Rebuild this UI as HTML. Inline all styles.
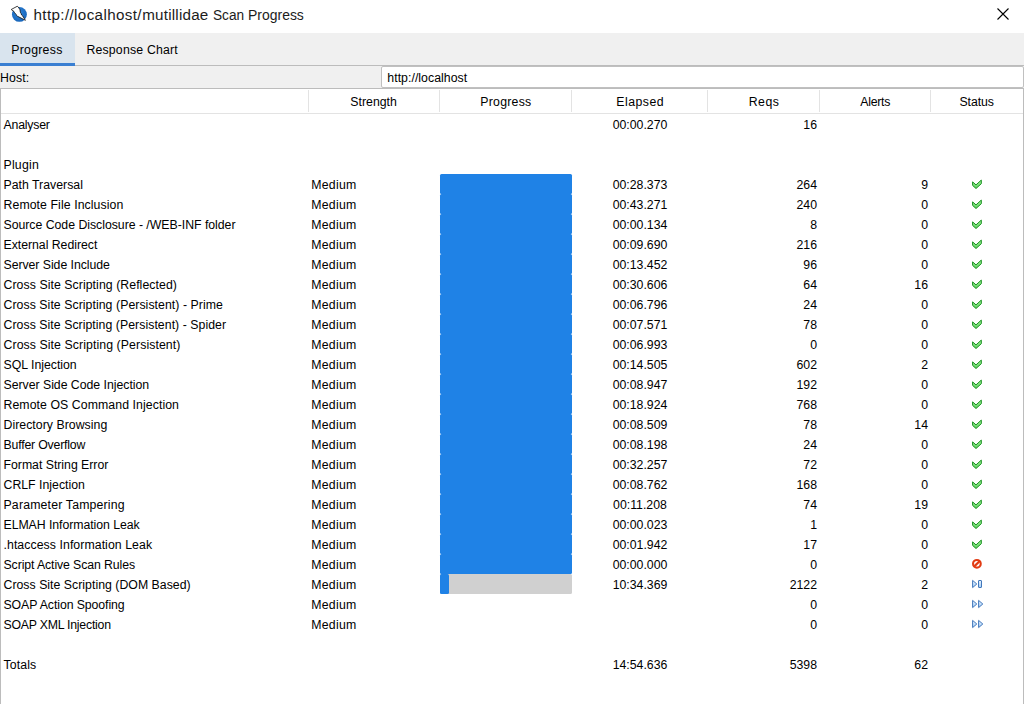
<!DOCTYPE html>
<html><head><meta charset="utf-8"><style>
*{margin:0;padding:0;box-sizing:border-box}
html,body{width:1024px;height:704px;overflow:hidden;background:#fff;font-family:"Liberation Sans",sans-serif;color:#000}
.a{position:absolute}
.ti{top:4px;color:#1c1c1c;font-size:15.2px;line-height:22px;white-space:pre;transform-origin:0 0}
.t{position:absolute;font-size:12.3px;line-height:20px;white-space:pre;margin-top:1px}
.row{position:absolute;left:1px;width:1022px;height:20px}
.n{left:2.5px}
.s{left:310.2px;letter-spacing:0.26px}
.e{left:571px;width:136px;text-align:center}
.r{left:706px;width:110px;text-align:right}
.al{left:818px;width:109px;text-align:right}
.ic{position:absolute;left:965px;top:0}
.pb{position:absolute;left:439px;top:0;width:132px;height:20px;background:#1f82e6;border-radius:1.5px}
.pb.g{background:#d0d0d0}
.pb .f{position:absolute;left:0;top:0;height:20px;background:#1f82e6;border-radius:1.5px}
.hd{position:absolute;top:90px;height:24px;font-size:12.3px;line-height:24px;white-space:pre}
.sep{position:absolute;top:90px;width:1px;height:22px;background:#e3e3e3}
</style></head><body>
<!-- title bar -->
<div class="a" style="left:0;top:0;width:1024px;height:33px;background:#fff"></div>
<svg class="a" style="left:0;top:0" width="32" height="32" viewBox="0 0 32 32">
<defs><radialGradient id="ag" cx="0.45" cy="0.4" r="0.7"><stop offset="0" stop-color="#2f86dc"/><stop offset="1" stop-color="#1460b4"/></radialGradient></defs>
<circle cx="19.4" cy="14.4" r="7.45" fill="url(#ag)"/>
<path d="M11.2,9.5 L17.2,6.3 L18.2,6.9 L20.0,9.8 L20.3,12.2 L21.2,13.7 L21.6,15.0 L22.5,15.7 L25.4,20.3 L17.2,16.1 L16.4,15.3 L16.2,14.5 L14.6,12.8 L14.0,11.5 L13.0,10.8 Z" fill="#fff" stroke="#111" stroke-width="0.8" stroke-linejoin="round"/>
</svg>
<div class="a ti" style="left:33.5px;letter-spacing:0.37px">http://localhost/</div>
<div class="a ti" style="left:142.2px;letter-spacing:0.22px">mutillidae</div>
<div class="a ti" style="left:212.9px;transform:scaleX(0.9)">Scan</div>
<div class="a ti" style="left:248.4px;transform:scaleX(0.919)">Progress</div>
<svg class="a" style="left:996px;top:7px" width="14" height="14" viewBox="0 0 14 14"><path d="M1.5,1.5 L12.5,12.5 M12.5,1.5 L1.5,12.5" stroke="#000" stroke-width="1.1"/></svg>
<!-- tab bar -->
<div class="a" style="left:0;top:33px;width:1024px;height:33px;background:#f0f0f0"></div>
<div class="a" style="left:0;top:33px;width:75px;height:30px;background:#d9e4ee"></div>
<div class="a" style="left:0;top:63px;width:75px;height:3px;background:#3a7fd2"></div>
<div class="a" style="left:75px;top:65px;width:949px;height:1px;background:#bcbcbc"></div>
<div class="t" style="left:11.2px;top:39px;letter-spacing:0.271px">Progress</div>
<div class="t" style="left:86.4px;top:39px;letter-spacing:0.192px">Response Chart</div>
<!-- host -->
<div class="a" style="left:0;top:66px;width:1024px;height:22px;background:#f0f0f0"></div>
<div class="t" style="left:0px;top:67px;letter-spacing:0.1px">Host:</div>
<div class="a" style="left:381px;top:66px;width:643px;height:22px;background:#fff;border:1px solid #c0c0c0;border-radius:2px"></div>
<div class="t" style="left:387.3px;top:67px;letter-spacing:0.04px">http://localhost</div>
<!-- table -->
<div class="a" style="left:0;top:88px;width:1024px;height:616px;background:#fff;border:1px solid #bcbcbc;border-bottom:none"></div>
<div class="a" style="left:1px;top:113px;width:1022px;height:1px;background:#e3e3e3"></div>

<div class="sep" style="left:308px"></div>
<div class="sep" style="left:439px"></div>
<div class="sep" style="left:571px"></div>
<div class="sep" style="left:707px"></div>
<div class="sep" style="left:819px"></div>
<div class="sep" style="left:930px"></div>
<div class="hd" style="left:350.3px;letter-spacing:0.014px">Strength</div>
<div class="hd" style="left:480.3px;letter-spacing:0.243px">Progress</div>
<div class="hd" style="left:616.3px;letter-spacing:0.467px">Elapsed</div>
<div class="hd" style="left:748.7px;letter-spacing:0.533px">Reqs</div>
<div class="hd" style="left:860.3px;letter-spacing:-0.26px">Alerts</div>
<div class="hd" style="left:959.5px;letter-spacing:-0.1px">Status</div>
<div class="row" style="top:114px"><div class="t n" style="letter-spacing:-0.2px">Analyser</div><div class="t e">00:00.270</div><div class="t r">16</div></div>
<div class="row" style="top:134px"></div>
<div class="row" style="top:154px"><div class="t n" style="letter-spacing:0.22px">Plugin</div></div>
<div class="row" style="top:174px"><div class="t n" style="letter-spacing:0.008px">Path Traversal</div><div class="t s">Medium</div><div class="pb"></div><div class="t e">00:28.373</div><div class="t r">264</div><div class="t al">9</div><div class="ic"><svg width="24" height="20" viewBox="0 0 24 20"><defs><linearGradient id="gg" x1="0" y1="0" x2="0" y2="1"><stop offset="0" stop-color="#a6f5a0"/><stop offset="1" stop-color="#5ccf5c"/></linearGradient></defs><polygon points="6.6,7.9 10,10.9 15.3,6.1 15.3,9.7 10,14.5 6.6,11.4" fill="url(#gg)" stroke="#17901f" stroke-width="1" stroke-linejoin="miter"/></svg></div></div>
<div class="row" style="top:194px"><div class="t n" style="letter-spacing:0.08px">Remote File Inclusion</div><div class="t s">Medium</div><div class="pb"></div><div class="t e">00:43.271</div><div class="t r">240</div><div class="t al">0</div><div class="ic"><svg width="24" height="20" viewBox="0 0 24 20"><defs><linearGradient id="gg" x1="0" y1="0" x2="0" y2="1"><stop offset="0" stop-color="#a6f5a0"/><stop offset="1" stop-color="#5ccf5c"/></linearGradient></defs><polygon points="6.6,7.9 10,10.9 15.3,6.1 15.3,9.7 10,14.5 6.6,11.4" fill="url(#gg)" stroke="#17901f" stroke-width="1" stroke-linejoin="miter"/></svg></div></div>
<div class="row" style="top:214px"><div class="t n" style="letter-spacing:-0.026px">Source Code Disclosure - /WEB-INF folder</div><div class="t s">Medium</div><div class="pb"></div><div class="t e">00:00.134</div><div class="t r">8</div><div class="t al">0</div><div class="ic"><svg width="24" height="20" viewBox="0 0 24 20"><defs><linearGradient id="gg" x1="0" y1="0" x2="0" y2="1"><stop offset="0" stop-color="#a6f5a0"/><stop offset="1" stop-color="#5ccf5c"/></linearGradient></defs><polygon points="6.6,7.9 10,10.9 15.3,6.1 15.3,9.7 10,14.5 6.6,11.4" fill="url(#gg)" stroke="#17901f" stroke-width="1" stroke-linejoin="miter"/></svg></div></div>
<div class="row" style="top:234px"><div class="t n" style="letter-spacing:-0.031px">External Redirect</div><div class="t s">Medium</div><div class="pb"></div><div class="t e">00:09.690</div><div class="t r">216</div><div class="t al">0</div><div class="ic"><svg width="24" height="20" viewBox="0 0 24 20"><defs><linearGradient id="gg" x1="0" y1="0" x2="0" y2="1"><stop offset="0" stop-color="#a6f5a0"/><stop offset="1" stop-color="#5ccf5c"/></linearGradient></defs><polygon points="6.6,7.9 10,10.9 15.3,6.1 15.3,9.7 10,14.5 6.6,11.4" fill="url(#gg)" stroke="#17901f" stroke-width="1" stroke-linejoin="miter"/></svg></div></div>
<div class="row" style="top:254px"><div class="t n" style="letter-spacing:-0.05px">Server Side Include</div><div class="t s">Medium</div><div class="pb"></div><div class="t e">00:13.452</div><div class="t r">96</div><div class="t al">0</div><div class="ic"><svg width="24" height="20" viewBox="0 0 24 20"><defs><linearGradient id="gg" x1="0" y1="0" x2="0" y2="1"><stop offset="0" stop-color="#a6f5a0"/><stop offset="1" stop-color="#5ccf5c"/></linearGradient></defs><polygon points="6.6,7.9 10,10.9 15.3,6.1 15.3,9.7 10,14.5 6.6,11.4" fill="url(#gg)" stroke="#17901f" stroke-width="1" stroke-linejoin="miter"/></svg></div></div>
<div class="row" style="top:274px"><div class="t n" style="letter-spacing:0.06px">Cross Site Scripting (Reflected)</div><div class="t s">Medium</div><div class="pb"></div><div class="t e">00:30.606</div><div class="t r">64</div><div class="t al">16</div><div class="ic"><svg width="24" height="20" viewBox="0 0 24 20"><defs><linearGradient id="gg" x1="0" y1="0" x2="0" y2="1"><stop offset="0" stop-color="#a6f5a0"/><stop offset="1" stop-color="#5ccf5c"/></linearGradient></defs><polygon points="6.6,7.9 10,10.9 15.3,6.1 15.3,9.7 10,14.5 6.6,11.4" fill="url(#gg)" stroke="#17901f" stroke-width="1" stroke-linejoin="miter"/></svg></div></div>
<div class="row" style="top:294px"><div class="t n" style="letter-spacing:0.052px">Cross Site Scripting (Persistent) - Prime</div><div class="t s">Medium</div><div class="pb"></div><div class="t e">00:06.796</div><div class="t r">24</div><div class="t al">0</div><div class="ic"><svg width="24" height="20" viewBox="0 0 24 20"><defs><linearGradient id="gg" x1="0" y1="0" x2="0" y2="1"><stop offset="0" stop-color="#a6f5a0"/><stop offset="1" stop-color="#5ccf5c"/></linearGradient></defs><polygon points="6.6,7.9 10,10.9 15.3,6.1 15.3,9.7 10,14.5 6.6,11.4" fill="url(#gg)" stroke="#17901f" stroke-width="1" stroke-linejoin="miter"/></svg></div></div>
<div class="row" style="top:314px"><div class="t n" style="letter-spacing:0.045px">Cross Site Scripting (Persistent) - Spider</div><div class="t s">Medium</div><div class="pb"></div><div class="t e">00:07.571</div><div class="t r">78</div><div class="t al">0</div><div class="ic"><svg width="24" height="20" viewBox="0 0 24 20"><defs><linearGradient id="gg" x1="0" y1="0" x2="0" y2="1"><stop offset="0" stop-color="#a6f5a0"/><stop offset="1" stop-color="#5ccf5c"/></linearGradient></defs><polygon points="6.6,7.9 10,10.9 15.3,6.1 15.3,9.7 10,14.5 6.6,11.4" fill="url(#gg)" stroke="#17901f" stroke-width="1" stroke-linejoin="miter"/></svg></div></div>
<div class="row" style="top:334px"><div class="t n" style="letter-spacing:0.081px">Cross Site Scripting (Persistent)</div><div class="t s">Medium</div><div class="pb"></div><div class="t e">00:06.993</div><div class="t r">0</div><div class="t al">0</div><div class="ic"><svg width="24" height="20" viewBox="0 0 24 20"><defs><linearGradient id="gg" x1="0" y1="0" x2="0" y2="1"><stop offset="0" stop-color="#a6f5a0"/><stop offset="1" stop-color="#5ccf5c"/></linearGradient></defs><polygon points="6.6,7.9 10,10.9 15.3,6.1 15.3,9.7 10,14.5 6.6,11.4" fill="url(#gg)" stroke="#17901f" stroke-width="1" stroke-linejoin="miter"/></svg></div></div>
<div class="row" style="top:354px"><div class="t n" style="letter-spacing:-0.013px">SQL Injection</div><div class="t s">Medium</div><div class="pb"></div><div class="t e">00:14.505</div><div class="t r">602</div><div class="t al">2</div><div class="ic"><svg width="24" height="20" viewBox="0 0 24 20"><defs><linearGradient id="gg" x1="0" y1="0" x2="0" y2="1"><stop offset="0" stop-color="#a6f5a0"/><stop offset="1" stop-color="#5ccf5c"/></linearGradient></defs><polygon points="6.6,7.9 10,10.9 15.3,6.1 15.3,9.7 10,14.5 6.6,11.4" fill="url(#gg)" stroke="#17901f" stroke-width="1" stroke-linejoin="miter"/></svg></div></div>
<div class="row" style="top:374px"><div class="t n" style="letter-spacing:-0.026px">Server Side Code Injection</div><div class="t s">Medium</div><div class="pb"></div><div class="t e">00:08.947</div><div class="t r">192</div><div class="t al">0</div><div class="ic"><svg width="24" height="20" viewBox="0 0 24 20"><defs><linearGradient id="gg" x1="0" y1="0" x2="0" y2="1"><stop offset="0" stop-color="#a6f5a0"/><stop offset="1" stop-color="#5ccf5c"/></linearGradient></defs><polygon points="6.6,7.9 10,10.9 15.3,6.1 15.3,9.7 10,14.5 6.6,11.4" fill="url(#gg)" stroke="#17901f" stroke-width="1" stroke-linejoin="miter"/></svg></div></div>
<div class="row" style="top:394px"><div class="t n" style="letter-spacing:0.071px">Remote OS Command Injection</div><div class="t s">Medium</div><div class="pb"></div><div class="t e">00:18.924</div><div class="t r">768</div><div class="t al">0</div><div class="ic"><svg width="24" height="20" viewBox="0 0 24 20"><defs><linearGradient id="gg" x1="0" y1="0" x2="0" y2="1"><stop offset="0" stop-color="#a6f5a0"/><stop offset="1" stop-color="#5ccf5c"/></linearGradient></defs><polygon points="6.6,7.9 10,10.9 15.3,6.1 15.3,9.7 10,14.5 6.6,11.4" fill="url(#gg)" stroke="#17901f" stroke-width="1" stroke-linejoin="miter"/></svg></div></div>
<div class="row" style="top:414px"><div class="t n" style="letter-spacing:0.035px">Directory Browsing</div><div class="t s">Medium</div><div class="pb"></div><div class="t e">00:08.509</div><div class="t r">78</div><div class="t al">14</div><div class="ic"><svg width="24" height="20" viewBox="0 0 24 20"><defs><linearGradient id="gg" x1="0" y1="0" x2="0" y2="1"><stop offset="0" stop-color="#a6f5a0"/><stop offset="1" stop-color="#5ccf5c"/></linearGradient></defs><polygon points="6.6,7.9 10,10.9 15.3,6.1 15.3,9.7 10,14.5 6.6,11.4" fill="url(#gg)" stroke="#17901f" stroke-width="1" stroke-linejoin="miter"/></svg></div></div>
<div class="row" style="top:434px"><div class="t n" style="letter-spacing:-0.189px">Buffer Overflow</div><div class="t s">Medium</div><div class="pb"></div><div class="t e">00:08.198</div><div class="t r">24</div><div class="t al">0</div><div class="ic"><svg width="24" height="20" viewBox="0 0 24 20"><defs><linearGradient id="gg" x1="0" y1="0" x2="0" y2="1"><stop offset="0" stop-color="#a6f5a0"/><stop offset="1" stop-color="#5ccf5c"/></linearGradient></defs><polygon points="6.6,7.9 10,10.9 15.3,6.1 15.3,9.7 10,14.5 6.6,11.4" fill="url(#gg)" stroke="#17901f" stroke-width="1" stroke-linejoin="miter"/></svg></div></div>
<div class="row" style="top:454px"><div class="t n" style="letter-spacing:-0.022px">Format String Error</div><div class="t s">Medium</div><div class="pb"></div><div class="t e">00:32.257</div><div class="t r">72</div><div class="t al">0</div><div class="ic"><svg width="24" height="20" viewBox="0 0 24 20"><defs><linearGradient id="gg" x1="0" y1="0" x2="0" y2="1"><stop offset="0" stop-color="#a6f5a0"/><stop offset="1" stop-color="#5ccf5c"/></linearGradient></defs><polygon points="6.6,7.9 10,10.9 15.3,6.1 15.3,9.7 10,14.5 6.6,11.4" fill="url(#gg)" stroke="#17901f" stroke-width="1" stroke-linejoin="miter"/></svg></div></div>
<div class="row" style="top:474px"><div class="t n" style="letter-spacing:0.008px">CRLF Injection</div><div class="t s">Medium</div><div class="pb"></div><div class="t e">00:08.762</div><div class="t r">168</div><div class="t al">0</div><div class="ic"><svg width="24" height="20" viewBox="0 0 24 20"><defs><linearGradient id="gg" x1="0" y1="0" x2="0" y2="1"><stop offset="0" stop-color="#a6f5a0"/><stop offset="1" stop-color="#5ccf5c"/></linearGradient></defs><polygon points="6.6,7.9 10,10.9 15.3,6.1 15.3,9.7 10,14.5 6.6,11.4" fill="url(#gg)" stroke="#17901f" stroke-width="1" stroke-linejoin="miter"/></svg></div></div>
<div class="row" style="top:494px"><div class="t n" style="letter-spacing:0.172px">Parameter Tampering</div><div class="t s">Medium</div><div class="pb"></div><div class="t e">00:11.208</div><div class="t r">74</div><div class="t al">19</div><div class="ic"><svg width="24" height="20" viewBox="0 0 24 20"><defs><linearGradient id="gg" x1="0" y1="0" x2="0" y2="1"><stop offset="0" stop-color="#a6f5a0"/><stop offset="1" stop-color="#5ccf5c"/></linearGradient></defs><polygon points="6.6,7.9 10,10.9 15.3,6.1 15.3,9.7 10,14.5 6.6,11.4" fill="url(#gg)" stroke="#17901f" stroke-width="1" stroke-linejoin="miter"/></svg></div></div>
<div class="row" style="top:514px"><div class="t n" style="letter-spacing:-0.055px">ELMAH Information Leak</div><div class="t s">Medium</div><div class="pb"></div><div class="t e">00:00.023</div><div class="t r">1</div><div class="t al">0</div><div class="ic"><svg width="24" height="20" viewBox="0 0 24 20"><defs><linearGradient id="gg" x1="0" y1="0" x2="0" y2="1"><stop offset="0" stop-color="#a6f5a0"/><stop offset="1" stop-color="#5ccf5c"/></linearGradient></defs><polygon points="6.6,7.9 10,10.9 15.3,6.1 15.3,9.7 10,14.5 6.6,11.4" fill="url(#gg)" stroke="#17901f" stroke-width="1" stroke-linejoin="miter"/></svg></div></div>
<div class="row" style="top:534px"><div class="t n" style="letter-spacing:0.064px">.htaccess Information Leak</div><div class="t s">Medium</div><div class="pb"></div><div class="t e">00:01.942</div><div class="t r">17</div><div class="t al">0</div><div class="ic"><svg width="24" height="20" viewBox="0 0 24 20"><defs><linearGradient id="gg" x1="0" y1="0" x2="0" y2="1"><stop offset="0" stop-color="#a6f5a0"/><stop offset="1" stop-color="#5ccf5c"/></linearGradient></defs><polygon points="6.6,7.9 10,10.9 15.3,6.1 15.3,9.7 10,14.5 6.6,11.4" fill="url(#gg)" stroke="#17901f" stroke-width="1" stroke-linejoin="miter"/></svg></div></div>
<div class="row" style="top:554px"><div class="t n" style="letter-spacing:-0.104px">Script Active Scan Rules</div><div class="t s">Medium</div><div class="pb"></div><div class="t e">00:00.000</div><div class="t r">0</div><div class="t al">0</div><div class="ic"><svg width="24" height="20" viewBox="0 0 24 20"><circle cx="10.9" cy="9.8" r="3.85" fill="none" stroke="#e23c14" stroke-width="2.1"/><line x1="13.5" y1="7.2" x2="8.3" y2="12.4" stroke="#e23c14" stroke-width="2.2"/></svg></div></div>
<div class="row" style="top:574px"><div class="t n" style="letter-spacing:0.019px">Cross Site Scripting (DOM Based)</div><div class="t s">Medium</div><div class="pb g"><div class="f" style="width:9px"></div></div><div class="t e">10:34.369</div><div class="t r">2122</div><div class="t al">2</div><div class="ic"><svg width="24" height="20" viewBox="0 0 24 20"><defs><linearGradient id="gb" x1="0" y1="0" x2="0" y2="1"><stop offset="0" stop-color="#eaf4ff"/><stop offset="1" stop-color="#9fcdf8"/></linearGradient></defs><polygon points="6.6,6.4 10.8,10 6.6,13.6" fill="url(#gb)" stroke="#4277bb" stroke-width="1" stroke-linejoin="round"/><rect x="12.5" y="6.5" width="3" height="7" rx="0.4" fill="url(#gb)" stroke="#4277bb" stroke-width="1"/></svg></div></div>
<div class="row" style="top:594px"><div class="t n" style="letter-spacing:-0.087px">SOAP Action Spoofing</div><div class="t s">Medium</div><div class="t r">0</div><div class="t al">0</div><div class="ic"><svg width="24" height="20" viewBox="0 0 24 20"><polygon points="6.6,6.4 10.8,10 6.6,13.6" fill="url(#gb)" stroke="#4277bb" stroke-width="1" stroke-linejoin="round"/><polygon points="12.6,6.4 16.8,10 12.6,13.6" fill="url(#gb)" stroke="#4277bb" stroke-width="1" stroke-linejoin="round"/></svg></div></div>
<div class="row" style="top:614px"><div class="t n" style="letter-spacing:-0.229px">SOAP XML Injection</div><div class="t s">Medium</div><div class="t r">0</div><div class="t al">0</div><div class="ic"><svg width="24" height="20" viewBox="0 0 24 20"><polygon points="6.6,6.4 10.8,10 6.6,13.6" fill="url(#gb)" stroke="#4277bb" stroke-width="1" stroke-linejoin="round"/><polygon points="12.6,6.4 16.8,10 12.6,13.6" fill="url(#gb)" stroke="#4277bb" stroke-width="1" stroke-linejoin="round"/></svg></div></div>
<div class="row" style="top:634px"></div>
<div class="row" style="top:654px"><div class="t n" style="letter-spacing:0.12px">Totals</div><div class="t e">14:54.636</div><div class="t r">5398</div><div class="t al">62</div></div>
</body></html>
